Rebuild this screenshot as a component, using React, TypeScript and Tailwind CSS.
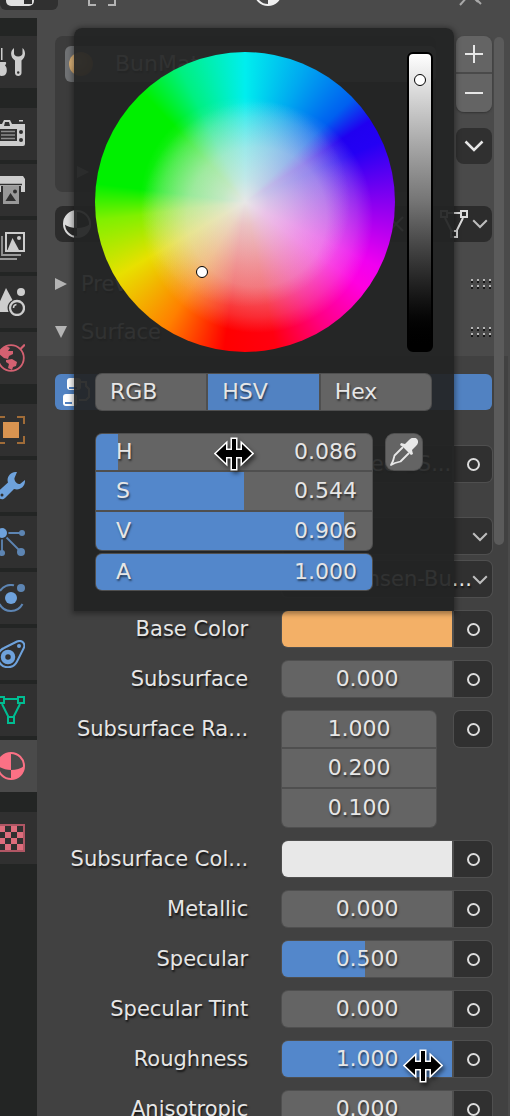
import { useState } from "react";
import type { ReactNode } from "react";

const fieldText = "text-[22px] leading-7 text-[#e6e6e6] [text-shadow:1px_2px_2px_rgba(0,0,0,0.55)]";
const labelText = "text-[21px] leading-7 text-[#e6e6e6] [text-shadow:1px_2px_2px_rgba(0,0,0,0.75)]";

function Icon({ children, className = "" }: { children: ReactNode; className?: string }) {
  return (
    <svg viewBox="0 0 28 28" className={"h-7 w-7 shrink-0 " + className} fill="none" aria-hidden="true">
      {children}
    </svg>
  );
}

function MeshIcon({ className = "" }: { className?: string }) {
  return (
    <Icon className={className}>
      <g stroke="currentColor" strokeWidth="2">
        <path d="M8 3h12M5 8l6.500 13M23 8l-6.500 13" />
        <path d="M1 1h6v6H1zM21 1h6v6h-6zM11 21h6v6h-6z" />
      </g>
    </Icon>
  );
}

function MaterialIcon({ className = "" }: { className?: string }) {
  return (
    <Icon className={className}>
      <circle cx="14" cy="14" r="13" stroke="currentColor" strokeWidth="2" />
      <path d="M14 1A13 13 0 0 0 1 14c3 2.500 8 4 13 4z" fill="currentColor" />
      <path d="M14 18c5 0 10-1.500 13-4a13 13 0 0 1-13 13z" fill="currentColor" />
    </Icon>
  );
}

function Chevron({ className = "w-5" }: { className?: string }) {
  return (
    <svg viewBox="0 0 20 12" className={className} fill="none" stroke="currentColor" strokeWidth="2.500" aria-hidden="true">
      <path d="M1.500 1.500L10 10l8.500-8.500" />
    </svg>
  );
}

const tabGroups: { name: string; icon: ReactNode; active?: boolean }[][] = [
  [
    {
      name: "Tool",
      icon: (
        <Icon className="text-[#cdcdcd]">
          <g fill="currentColor">
            <path d="M4 0h1.500v12H4z" />
            <path d="M1 14h7c2 0 1 2.500 0 3.500 2 1.500 2 5 1.500 7C9 27 7 28 4.500 28S0 27 0 24v-6c0-2-1-3 1-4z" />
            <path d="M17 0c-4 3-4 9 1 12.500V25c0 4 6.500 4 6.500 0V12.500C29 9 29 3 25.500 0v5.500c0 1.500-1.500 3-4.300 3S17 7 17 5.500z" />
          </g>
          <circle cx="21.200" cy="24.500" r="1.200" fill="#303030" />
        </Icon>
      ),
    },
  ],
  [
    {
      name: "Render",
      icon: (
        <Icon className="text-[#cdcdcd]">
          <path fill="currentColor" d="M7 0h6l2 4h13v20a2 2 0 0 1-2 2H0V4h5zM22 0h4v1.500h-4z" />
          <g fill="#303030">
            <path d="M8 2h4l1 4H7z" />
            <circle cx="24" cy="12" r="2" />
            <circle cx="24" cy="20" r="2" />
            <path d="M2 9h18v12H2z" />
          </g>
          <path d="M4 11.500h14M4 15h14M4 18.500h14" stroke="#8c8c8c" strokeWidth="1.500" />
        </Icon>
      ),
    },
    {
      name: "Output",
      icon: (
        <Icon className="text-[#cdcdcd]">
          <path fill="currentColor" d="M2 0h24l2 3v13h-4v-6H4v6H0V3z" />
          <path d="M3 8.500h22" stroke="#303030" strokeWidth="1.500" />
          <path d="M6 10h16v18H6z" fill="#999" />
          <path d="M8.500 25l5-8 5.500 8z" fill="#303030" />
          <circle cx="18" cy="15.500" r="2" fill="#303030" />
        </Icon>
      ),
    },
    {
      name: "View Layer",
      icon: (
        <Icon className="text-[#cdcdcd]">
          <path d="M9 1h18v18H9z" stroke="currentColor" strokeWidth="2" />
          <path d="M10.500 18l5-12 6.500 12z" fill="currentColor" />
          <circle cx="22" cy="6" r="2" fill="currentColor" />
          <path d="M5 4v19h19M1 8v19h19" stroke="#999" strokeWidth="1.800" />
        </Icon>
      ),
    },
    {
      name: "Scene",
      icon: (
        <Icon className="text-[#cdcdcd]">
          <path d="M9 0l6.500 12c-5 3-6 7-4 12H0v-4z" fill="currentColor" />
          <circle cx="24" cy="4" r="4" fill="currentColor" />
          <circle cx="20" cy="20" r="7" stroke="currentColor" strokeWidth="2.300" />
          <path d="M16.500 20a3.500 3.500 0 0 1 3-3.500" stroke="currentColor" strokeWidth="1.500" />
        </Icon>
      ),
    },
    {
      name: "World",
      icon: (
        <Icon className="text-[#d46171]">
          <circle cx="14" cy="14" r="12.800" stroke="currentColor" strokeWidth="1.800" />
          <path d="M23.500 5L28 .5" stroke="currentColor" strokeWidth="2.200" />
          <path d="M4 5l5-3 4 2-2 3 5 0 0 3-4 2-1 3-4-1-5-4z" fill="currentColor" />
          <path d="M9 16l6-1 5 3-1 4-3 1-1 3-4-2 1-4-3-2z" fill="currentColor" />
        </Icon>
      ),
    },
  ],
  [
    {
      name: "Object",
      icon: (
        <Icon>
          <path d="M6 6h16v16H6z" fill="#da9450" />
          <path d="M1 8V1h7M20 1h7v7M27 20v7h-7M8 27H1v-7" stroke="#a06c38" strokeWidth="2" />
        </Icon>
      ),
    },
    {
      name: "Modifiers",
      icon: (
        <Icon className="text-[#6ea2dc]">
          <path
            fill="currentColor"
            d="M20 0c-6-.5-11 5-9 10.500L1 19.500c-4 4 3 10.500 7 6.500l9-9c6 2 11.500-2.500 11-9l-5 4c-3 0-6-3-5.500-6z"
          />
          <circle cx="5" cy="23" r="1.500" fill="#303030" />
        </Icon>
      ),
    },
    {
      name: "Particles",
      icon: (
        <Icon>
          <path d="M5 5h20M5 5v20M5 5l19 19" stroke="#5d85b3" strokeWidth="1.800" />
          <circle cx="5" cy="5" r="6.500" fill="#303030" />
          <circle cx="5" cy="5" r="5" fill="#6ea2dc" />
          <g fill="#5d85b3">
            <circle cx="25" cy="5" r="3" />
            <circle cx="24" cy="24" r="4" />
            <circle cx="5" cy="25" r="3" />
          </g>
        </Icon>
      ),
    },
    {
      name: "Physics",
      icon: (
        <Icon>
          <circle cx="14" cy="14" r="6" fill="#6ea2dc" />
          <circle cx="24" cy="4" r="4" fill="#5d85b3" />
          <path d="M17 1.300A13 13 0 0 0 3 7M2.500 20a13 13 0 0 0 23 0" stroke="#5d85b3" strokeWidth="2" />
        </Icon>
      ),
    },
    {
      name: "Constraints",
      icon: (
        <Icon className="text-[#6ea2dc]">
          <path d="M20 1.500c5-2 8.500 2 7 6l-7 14c-4 8-14 7-17.500 1S1.500 10.500 7 8z" stroke="currentColor" strokeWidth="2" />
          <circle cx="11" cy="17" r="5" stroke="currentColor" strokeWidth="4.500" />
          <circle cx="22" cy="6" r="2" fill="currentColor" />
        </Icon>
      ),
    },
    { name: "Object Data", icon: <MeshIcon className="text-[#00bd92]" /> },
    { name: "Material", icon: <MaterialIcon className="text-[#fb7185]" />, active: true },
  ],
  [
    {
      name: "Texture",
      icon: (
        <Icon>
          <path d="M1 1h26v26H1z" fill="#303030" stroke="#b05664" strokeWidth="2" />
          <path
            fill="#dd6d7c"
            d="M2 2h6v6H2zM14 2h6v6h-6zM8 8h6v6H8zM20 8h6v6h-6zM2 14h6v6H2zM14 14h6v6h-6zM8 20h6v6H8zM20 20h6v6h-6z"
          />
        </Icon>
      ),
    },
  ],
];

function Sidebar() {
  return (
    <nav aria-label="Properties tabs" className="flex w-[37px] shrink-0 flex-col gap-5 overflow-hidden bg-[#232524] pt-[18px]">
      {tabGroups.map((group, i) => (
        <div key={i} className="flex flex-col gap-1">
          {group.map((tab) => (
            <button
              key={tab.name}
              type="button"
              aria-label={tab.name}
              className={"flex h-[52px] items-center justify-end pr-3 " + (tab.active ? "bg-[#4a4a4a]" : "bg-[#303030]")}
            >
              {tab.icon}
            </button>
          ))}
        </div>
      ))}
    </nav>
  );
}

function NumberSlider({
  name,
  initial,
  caption,
  fill = true,
  className = "",
}: {
  name: string;
  initial: number;
  caption?: string;
  fill?: boolean;
  className?: string;
}) {
  const [value, setValue] = useState(initial);
  const width = value >= 1 ? "100%" : `max(0px, calc(${value * 100}% - 2px))`;
  return (
    <label className={"relative flex min-w-0 flex-1 items-center bg-[#646464] " + className}>
      {fill && <span className="absolute inset-y-0 left-0 bg-[#5387cb]" style={{ width }} />}
      <span
        className={
          "relative flex flex-1 items-center " + fieldText + (caption ? " justify-between pr-[15px] pb-px pl-5" : " justify-center")
        }
      >
        {caption && <span>{caption}</span>}
        <span>{value.toFixed(3)}</span>
      </span>
      <input
        type="range"
        aria-label={name}
        min={0}
        max={1}
        step={0.001}
        value={value}
        onChange={(e) => setValue(Number(e.target.value))}
        className="absolute inset-0 h-full w-full cursor-ew-resize opacity-0"
      />
    </label>
  );
}

function SocketButton({ name }: { name: string }) {
  return (
    <button type="button" aria-label={name + " input"} className="flex h-9 w-[38px] shrink-0 items-center justify-center bg-[#303030]">
      <span className="h-[13px] w-[13px] rounded-full border-2 border-[#dcdcdc]" />
    </button>
  );
}

function Row({ label, children }: { label: string; children: ReactNode }) {
  return (
    <div className="flex items-start gap-[34px]">
      <span className={"flex h-9 flex-1 items-center justify-end whitespace-nowrap " + labelText}>{label}</span>
      <div className="w-[48%]">{children}</div>
    </div>
  );
}

const frame = "overflow-hidden rounded-md bg-[#4f4f4f] ring-1 ring-[#4f4f4f]";

function SocketField({ name, children }: { name: string; children: ReactNode }) {
  return (
    <div className={"flex h-9 gap-0.5 " + frame}>
      {children}
      <SocketButton name={name} />
    </div>
  );
}

function ColorField({ name, initial }: { name: string; initial: string }) {
  const [color, setColor] = useState(initial);
  return (
    <label className="relative flex-1" style={{ backgroundColor: color }}>
      <input
        type="color"
        aria-label={name}
        value={color}
        onChange={(e) => setColor(e.target.value)}
        className="absolute inset-0 h-full w-full opacity-0"
      />
    </label>
  );
}

function SelectField({ name, options }: { name: string; options: string[] }) {
  return (
    <div className={"relative " + frame}>
      <select aria-label={name} className={"block h-9 w-full appearance-none bg-[#303030] pl-2.5 " + labelText}>
        {options.map((o) => (
          <option key={o}>{o}</option>
        ))}
      </select>
      <Chevron className="pointer-events-none absolute top-3.5 right-1 w-4 text-[#bdbdbd]" />
    </div>
  );
}

function Grip() {
  return (
    <svg viewBox="0 0 22 10" className="w-[22px]" aria-hidden="true">
      {[1, 7, 13, 19].map((x) => (
        <g key={x}>
          <path d={`M${x} 0h2v2h-2zM${x} 6h2v2h-2z`} fill="#b5b5b5" />
          <path d={`M${x} 2h2v2h-2zM${x} 8h2v2h-2z`} fill="#161616" />
        </g>
      ))}
    </svg>
  );
}

function PanelHeading({ title, open }: { title: string; open: boolean }) {
  return (
    <button type="button" aria-expanded={open} className="flex h-12 w-full items-center">
      <svg viewBox="0 0 12 12" className="w-3" fill="#b4b4b4" aria-hidden="true">
        <path d={open ? "M0 0h12L6 12z" : "M0 0l12 6L0 12z"} />
      </svg>
      <span className={"flex-1 pl-[14px] text-left " + labelText}>{title}</span>
      <Grip />
    </button>
  );
}

function Header() {
  return (
    <header className="-mt-[34px] flex h-[52px] shrink-0 items-center bg-[#4a4a4a]">
      <button type="button" aria-label="Editor type" className="flex h-9 w-[58px] items-center rounded-md bg-[#303030] pl-1.5">
        <svg viewBox="0 0 28 28" className="w-7" aria-hidden="true">
          <rect width="28" height="28" rx="5" fill="#e0e0e0" />
          <path d="M18 20h8v6h-8z" fill="#303030" />
        </svg>
      </button>
      <div className="flex flex-1 items-center pl-[30px] text-[22px] leading-7 text-[#2c2c2c]">
        <Icon className="text-[#b4b4b4]">
          <path d="M1 8V1h7M20 1h7v7M27 20v7h-7M8 27H1v-7" stroke="currentColor" strokeWidth="2" />
        </Icon>
        <span className="w-[138px] pl-[22px]">Cube</span>
        <MaterialIcon className="text-[#f0f0f0]" />
        <span className="flex-1 pl-4">BunMaterial</span>
      </div>
      <button type="button" aria-label="Pin" className="mr-6 text-[#a8a8a8]">
        <Icon>
          <path d="M2 27l8-9M15 18l8 8M8 12l12 12M12 4l12 12M10 14l4-10M18 20l8-4" stroke="currentColor" strokeWidth="2" />
        </Icon>
      </button>
    </header>
  );
}

function Properties() {
  return (
    <main className="relative min-w-0 flex-1 border-r-2 border-[#4a4a4a] bg-[#414141]">
      <div className="bg-[#4a4a4a] pt-[18px] pr-4 pl-[18px]">
        <div className="flex gap-5">
          <div className="flex h-[156px] flex-1 flex-col justify-between rounded-lg bg-[#3c3c3c] pt-2.5 pb-[14px] pl-2.5">
            <div className="flex h-9 items-center rounded-md bg-[#707274] pl-1">
              <span className="h-6 w-6 rounded-full bg-[radial-gradient(circle_at_40%_40%,#efc98f,#b98a50)]" />
              <span className={"pl-[22px] " + fieldText}>BunMaterial</span>
            </div>
            <svg viewBox="0 0 12 12" className="ml-3 w-3" fill="#a0a0a0" aria-hidden="true">
              <path d="M0 0l12 6L0 12z" />
            </svg>
          </div>
          <div className="flex w-9 flex-col text-[#e6e6e6]">
            <div className="flex flex-col gap-0.5 overflow-hidden rounded-lg bg-[#4a4a4a] shadow-[0_1px_2px_#333]">
              <button type="button" aria-label="Add slot" className="flex h-9 items-center justify-center bg-[#646464]">
                <svg viewBox="0 0 18 18" className="w-[18px]" stroke="currentColor" strokeWidth="2" aria-hidden="true">
                  <path d="M0 9h18M9 0v18" />
                </svg>
              </button>
              <button type="button" aria-label="Remove slot" className="flex h-[38px] items-center justify-center bg-[#646464]">
                <svg viewBox="0 0 18 18" className="w-[18px]" stroke="currentColor" strokeWidth="2" aria-hidden="true">
                  <path d="M0 9h18" />
                </svg>
              </button>
            </div>
            <button type="button" aria-label="Slot specials" className="mt-4 flex h-9 items-center justify-center rounded-lg bg-[#303030]">
              <Chevron />
            </button>
          </div>
        </div>
        <div className="mt-[14px] flex h-9 items-center justify-between overflow-hidden rounded-lg bg-[#2c2c2c] pr-1 pl-2 text-[#dcdcdc]">
          <button type="button" aria-label="Browse material">
            <MaterialIcon />
          </button>
          <div className="flex items-center gap-1">
            <button type="button" aria-label="Unlink" className="pr-8 text-[#b0b0b0]">
              <svg viewBox="0 0 16 16" className="w-4" stroke="currentColor" strokeWidth="2" aria-hidden="true">
                <path d="M1 1l14 14M15 1L1 15" />
              </svg>
            </button>
            <MeshIcon />
            <Chevron className="w-4 text-[#bdbdbd]" />
          </div>
        </div>
        <div className="pt-[18px]">
          <PanelHeading title="Preview" open={false} />
          <PanelHeading title="Surface" open />
        </div>
      </div>

      <div className="flex flex-col gap-[14px] pt-[18px] pr-4 pl-[18px]">
        <button type="button" aria-label="Use Nodes" className="flex h-9 items-center rounded-md bg-[#5182c2] pl-2">
          <Icon className="text-white">
            <rect x="4" y="0" width="14" height="12" rx="3" fill="currentColor" />
            <rect x="0" y="16" width="14" height="12" rx="3" fill="currentColor" />
            <path d="M6 10h8M2 25h7" stroke="#5182c2" strokeWidth="2" />
            <path d="M18 4h5v4l3 3v8l-3 3h-7" stroke="currentColor" strokeWidth="2" />
          </Icon>
        </button>
        <div className="mt-[22px]">
          <Row label="">
            <SocketField name="Surface">
              <button
                type="button"
                aria-label="Surface shader"
                className={"flex-1 overflow-hidden whitespace-nowrap bg-[#303030] pl-3 text-left " + labelText}
              >
                Principled BS...
              </button>
            </SocketField>
          </Row>
        </div>
        <div className="mt-[22px] flex flex-col gap-[7px]">
          <Row label="">
            <SelectField name="Distribution" options={["GGX", "Multiscatter GGX"]} />
          </Row>
          <Row label="">
            <SelectField name="Subsurface method" options={["Christensen-Bu...", "Random Walk"]} />
          </Row>
        </div>
        <Row label="Base Color">
          <SocketField name="Base Color">
            <ColorField name="Base Color" initial="#f3b067" />
          </SocketField>
        </Row>
        <Row label="Subsurface">
          <SocketField name="Subsurface">
            <NumberSlider name="Subsurface" initial={0} />
          </SocketField>
        </Row>
        <Row label="Subsurface Ra...">
          <div className="flex justify-between gap-[18px]">
            <div className={"flex flex-1 flex-col gap-0.5 " + frame}>
              <NumberSlider name="Subsurface radius red" initial={1} fill={false} className="min-h-9" />
              <NumberSlider name="Subsurface radius green" initial={0.2} fill={false} className="min-h-[38px]" />
              <NumberSlider name="Subsurface radius blue" initial={0.1} fill={false} className="min-h-[38px]" />
            </div>
            <div className={"h-9 " + frame}>
              <SocketButton name="Subsurface Radius" />
            </div>
          </div>
        </Row>
        <Row label="Subsurface Col...">
          <SocketField name="Subsurface Color">
            <ColorField name="Subsurface Color" initial="#e8e8e8" />
          </SocketField>
        </Row>
        {[
          { name: "Metallic", value: 0 },
          { name: "Specular", value: 0.5 },
          { name: "Specular Tint", value: 0 },
          { name: "Roughness", value: 1 },
          { name: "Anisotropic", value: 0 },
        ].map((p) => (
          <Row key={p.name} label={p.name}>
            <SocketField name={p.name}>
              <NumberSlider name={p.name} initial={p.value} />
            </SocketField>
          </Row>
        ))}
      </div>

      <div className="absolute top-[19px] right-1 h-[508px] w-2.5 rounded-full bg-[#5b5b5b]" />
    </main>
  );
}

function ColorPicker() {
  const [mode, setMode] = useState("HSV");
  return (
    <section
      aria-label="Color picker"
      className="absolute top-7 left-[74px] w-[380px] rounded-t-lg bg-[#222423]/93 px-[21px] pt-6 pb-[21px] shadow-[0_1px_5px_2px_rgba(0,0,0,0.35)]"
    >
      <div className="flex gap-3">
        <div className="relative h-[300px] w-[300px] rounded-full bg-[radial-gradient(circle_105px_at_50%_50%,#e7e7e7_0%,#e7e7e7b0_22%,#e7e7e755_60%,transparent_100%),radial-gradient(circle_116px_at_54%_55%,#e7e7e780_0%,#e7e7e770_60%,#e7e7e730_86%,transparent_100%),conic-gradient(#00eeee_0deg,#00a8f0_24deg,#0060f0_46deg,#2000f0_57deg,#2400f4_66deg,#8800f0_90deg,#f000f0_116deg,#ff00e0_126deg,#ff0080_148deg,#ff0010_168deg,#ff0000_188deg,#ff8000_212deg,#e8e000_240deg,#80f000_263deg,#00f000_277deg,#00f000_317deg,#00f080_334deg,#00eeee_360deg)]">
          <button
            type="button"
            aria-label="Hue and saturation"
            className="absolute top-[214px] left-[101px] h-3 w-3 rounded-full border border-black bg-white"
          />
        </div>
        <div className="relative h-[300px] w-[26px] rounded-md border-2 border-black bg-linear-to-b from-white via-[#747474] to-black">
          <input type="range" aria-label="Value" min={0} max={1} step={0.001} defaultValue={0.906} className="absolute inset-0 h-full w-full opacity-0 [writing-mode:vertical-lr]" />
          <span className="pointer-events-none absolute top-5 left-[5px] h-3 w-3 rounded-full border border-black bg-white" />
        </div>
      </div>

      <div role="tablist" className={"mt-[22px] mr-0.5 ml-px flex h-9 gap-0.5 " + frame}>
        {["RGB", "HSV", "Hex"].map((m) => (
          <button
            key={m}
            type="button"
            role="tab"
            aria-selected={mode === m}
            onClick={() => setMode(m)}
            className={"flex-1 pb-px pl-[14px] text-left " + fieldText + (mode === m ? " bg-[#5182c2]" : " bg-[#646464]")}
          >
            {m}
          </button>
        ))}
      </div>

      <div className="mt-6 ml-px flex items-start gap-[14px]">
        <div className="flex flex-1 flex-col gap-1">
          <div className={"flex flex-col gap-0.5 " + frame}>
            <NumberSlider name="Hue" caption="H" initial={0.086} className="min-h-9" />
            <NumberSlider name="Saturation" caption="S" initial={0.544} className="min-h-[38px]" />
            <NumberSlider name="Value amount" caption="V" initial={0.906} className="min-h-[38px]" />
          </div>
          <div className={"flex h-9 " + frame}>
            <NumberSlider name="Alpha" caption="A" initial={1} />
          </div>
        </div>
        <button type="button" aria-label="Eyedropper" className="mr-[11px] flex h-9 w-9 items-center justify-center rounded-lg bg-[#646464] text-[#e8e8e8] ring-1 ring-[#4f4f4f]">
          <Icon>
            <path
              fill="currentColor"
              d="M27 1c2 2.500 1 5-1 7l-4 4 1 4-2 1-4-4-4-4-3-2 1-2 4 1 4-4c3-3 6-3 8-1z"
            />
            <path d="M13 9L4.500 17.500 3 23l-2 4 4-2 5.500-1.500L19 15" stroke="currentColor" strokeWidth="1.800" strokeLinejoin="round" />
          </Icon>
        </button>
      </div>
    </section>
  );
}

function ResizeCursor({ className }: { className: string }) {
  return (
    <svg
      viewBox="0 0 40 34"
      className={"pointer-events-none absolute w-10 drop-shadow-[2px_3px_2px_rgba(0,0,0,0.5)] " + className}
      aria-hidden="true"
    >
      <path
        d="M2 16.500L12 7v6h6V2h4v11h6V7l10 9.500L28 26v-6h-6v12h-4V20h-6v6z"
        fill="#000"
        stroke="#fff"
        strokeWidth="3"
        paintOrder="stroke"
      />
    </svg>
  );
}

export default function App() {
  return (
    <div className="relative flex h-screen flex-col overflow-hidden bg-[#414141] font-['DejaVu_Sans',sans-serif]">
      <Header />
      <div className="flex flex-1">
        <Sidebar />
        <Properties />
      </div>
      <ColorPicker />
      <ResizeCursor className="top-[437px] left-[214px]" />
      <ResizeCursor className="top-[1049px] left-[403px]" />
    </div>
  );
}
